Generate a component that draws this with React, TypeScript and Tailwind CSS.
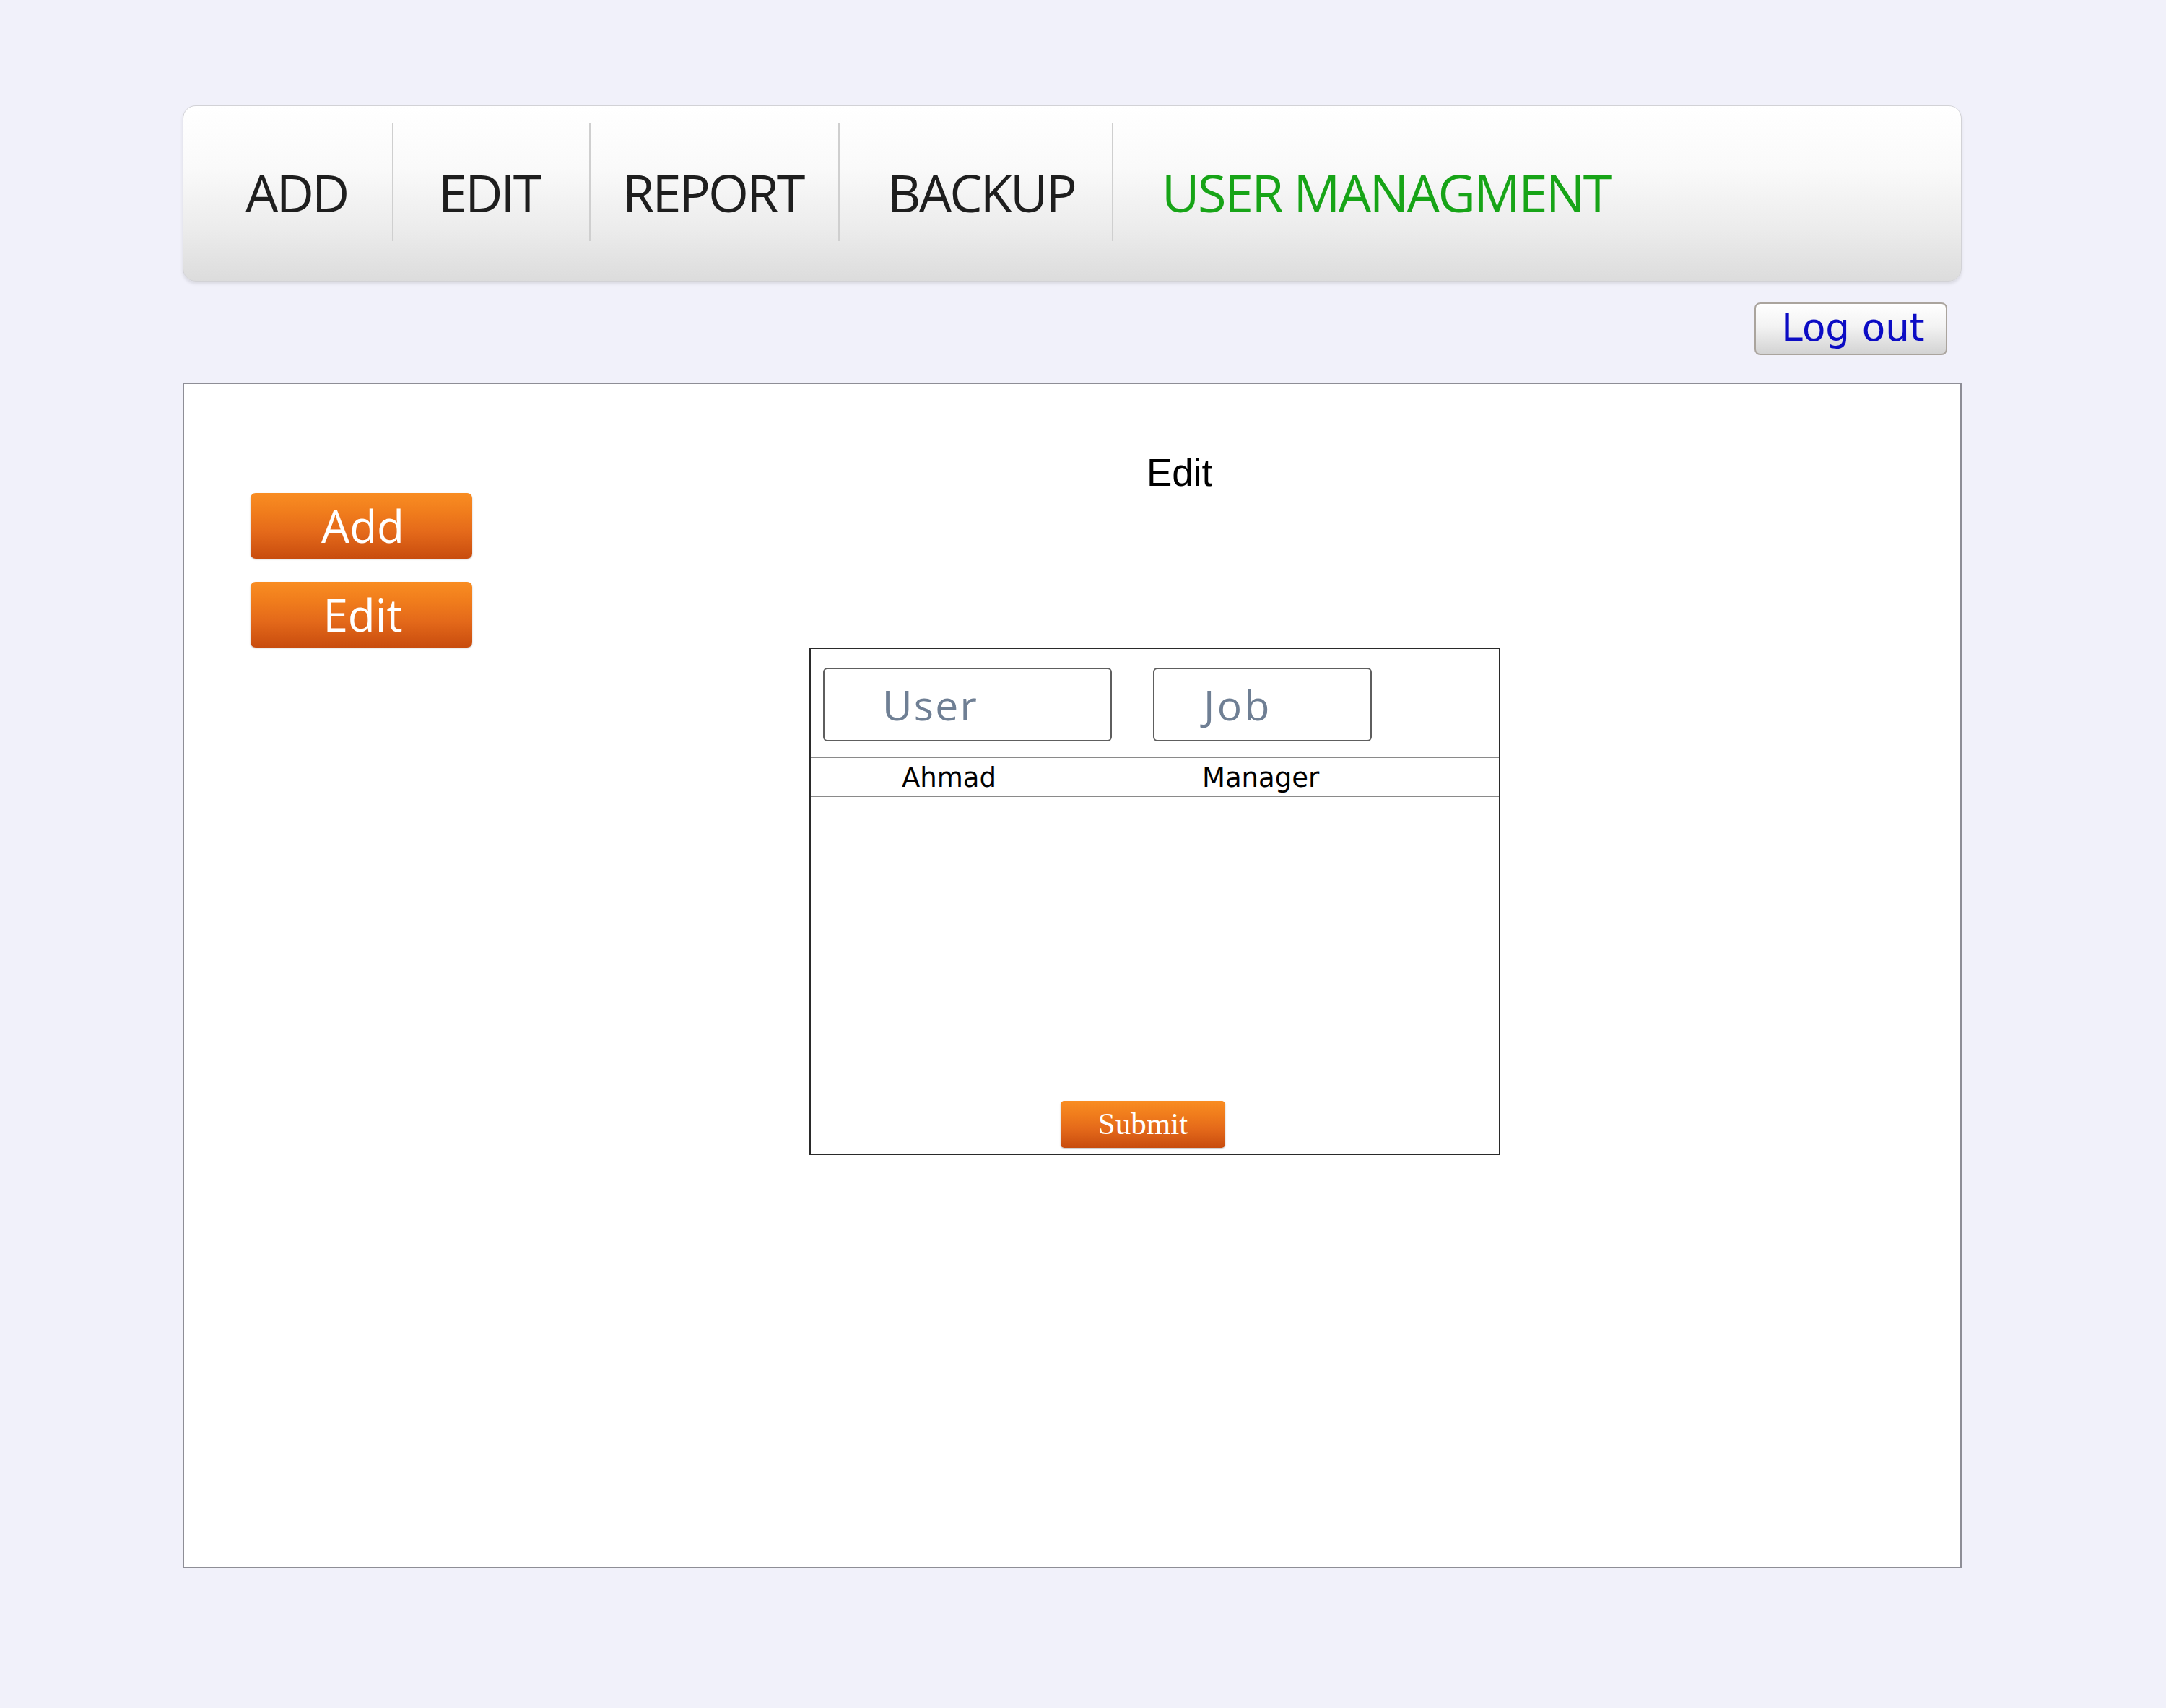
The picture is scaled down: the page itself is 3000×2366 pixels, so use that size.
import React from "react";

const navFont = { fontFamily: '"Open Sans", "Noto Sans", sans-serif' };

export default function App() {
  const items: { label: string; w: string; pl: string; active?: boolean }[] = [
    { label: "ADD", w: "w-[289px]", pl: "pl-[86px]" },
    { label: "EDIT", w: "w-[271px]", pl: "pl-[62px]" },
    { label: "REPORT", w: "w-[343px]", pl: "pl-[44px]" },
    { label: "BACKUP", w: "w-[377px]", pl: "pl-[66px]" },
  ];
  return (
    <div className="w-[3000px] h-[2366px] bg-[#f1f1fa] pt-[146px] overflow-hidden">
      {/* top nav */}
      <div className="ml-[253px] w-[2464px] h-[244px] rounded-[18px] border border-[#d2d2d6] bg-[linear-gradient(to_bottom,#ffffff_0%,#fafafa_35%,#ececec_70%,#dcdcdc_100%)] shadow-[0_3px_4px_rgba(0,0,0,0.10)] flex items-center">
        {items.map((it) => (
          <React.Fragment key={it.label}>
            <div className={`${it.w} ${it.pl} h-full flex items-center pb-[4px]`}>
              <span
                className="text-[72px] leading-none tracking-[-0.04em] text-[#1e1e1e] whitespace-nowrap"
                style={navFont}
              >
                {it.label}
              </span>
            </div>
            <div className="w-[2px] h-[163px] bg-[#cfcfcf] self-center mb-[32px]" />
          </React.Fragment>
        ))}
        <div className="pl-[67px] h-full flex items-center pb-[4px]">
          <span
            className="text-[72px] leading-none tracking-[-0.035em] text-[#17a417] whitespace-nowrap"
            style={navFont}
          >
            USER MANAGMENT
          </span>
        </div>
      </div>

      {/* log out */}
      <div className="ml-[253px] w-[2464px] mt-[29px] flex justify-end">
        <button
          className="mr-[20px] w-[267px] h-[73px] rounded-[8px] border-2 border-[#aaa49d] bg-[linear-gradient(to_bottom,#ffffff_0%,#f3f3f3_45%,#d3d3d3_100%)] flex items-center justify-center"
        >
          <span
            className="text-[53px] leading-none text-[#0c0cc4] pb-[4px] pl-[6px]"
            style={{ fontFamily: '"DejaVu Sans", Verdana, sans-serif' }}
          >
            Log out
          </span>
        </button>
      </div>

      {/* main panel */}
      <div className="ml-[253px] mt-[38px] w-[2464px] h-[1642px] bg-white border-2 border-[#8e8e96] flex items-start">
        <div className="ml-[92px] mt-[151px] flex flex-col gap-[32px]">
          {["Add", "Edit"].map((t) => (
            <button
              key={t}
              className="w-[307px] h-[91px] rounded-[7px] bg-[linear-gradient(to_bottom,#f98d22_0%,#f07c1c_30%,#e4691a_60%,#c84c0e_100%)] shadow-[0_1px_2px_rgba(0,0,0,0.25)] flex items-center justify-center"
            >
              <span
                className="text-[62px] leading-none text-white pb-[2px] pl-[4px]"
                style={navFont}
              >
                {t}
              </span>
            </button>
          ))}
        </div>

        <div className="ml-[467px] mt-[96px] flex flex-col">
          <div
            className="ml-[467px] text-[53px] leading-none text-black"
            style={{ fontFamily: '"Liberation Sans", Arial, sans-serif' }}
          >
            Edit
          </div>

          <div className="mt-[216px] w-[957px] h-[703px] border-2 border-[#2a2a2a] flex flex-col">
            <div className="pt-[26px] pl-[17px] flex gap-[57px]">
              <div className="w-[400px] h-[102px] rounded-[6px] border-2 border-[#5e5e5e] flex items-center pl-[80px]">
                <span
                  className="text-[57px] leading-none tracking-[0.04em] font-medium text-[#6f7f94]"
                  style={navFont}
                >
                  User
                </span>
              </div>
              <div className="w-[303px] h-[102px] rounded-[6px] border-2 border-[#5e5e5e] flex items-center pl-[68px]">
                <span
                  className="text-[57px] leading-none tracking-[0.06em] font-medium text-[#6f7f94]"
                  style={navFont}
                >
                  Job
                </span>
              </div>
            </div>
            <div className="mt-[21px] h-[2px] bg-[#8a8a8a]" />
            <div
              className="h-[52px] flex items-center text-[37px] leading-none text-black pt-[2px]"
              style={{ fontFamily: '"DejaVu Sans", Verdana, sans-serif' }}
            >
              <span className="ml-[126px] w-[416px]">Ahmad</span>
              <span>Manager</span>
            </div>
            <div className="h-[2px] bg-[#8a8a8a]" />
            <div className="flex-1" />
            <div className="pb-[8px] pl-[346px]">
              <button className="w-[228px] h-[65px] rounded-[5px] bg-[linear-gradient(to_bottom,#f98d22_0%,#f07c1c_30%,#e4691a_60%,#c84c0e_100%)] shadow-[0_1px_2px_rgba(0,0,0,0.25)] flex items-center justify-center">
                <span
                  className="text-[43px] leading-none text-white pb-[2px]"
                  style={{ fontFamily: '"Liberation Serif", "Times New Roman", serif' }}
                >
                  Submit
                </span>
              </button>
            </div>
          </div>
        </div>
      </div>
    </div>
  );
}
